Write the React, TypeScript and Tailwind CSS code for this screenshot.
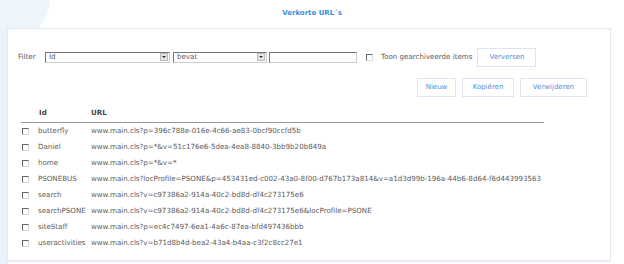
import React from "react";

interface Row {
  id: string;
  url: string;
}

const rows: Row[] = [
  { id: "butterfly", url: "www.main.cls?p=396c788e-016e-4c66-ae83-0bcf90ccfd5b" },
  { id: "Daniel", url: "www.main.cls?p=*&v=51c176e6-5dea-4ea8-8840-3bb9b20b849a" },
  { id: "home", url: "www.main.cls?p=*&v=*" },
  {
    id: "PSONEBUS",
    url: "www.main.cls?locProfile=PSONE&p=453431ed-c002-43a0-8f00-d767b173a814&v=a1d3d99b-196a-44b6-8d64-f6d443993563",
  },
  { id: "search", url: "www.main.cls?v=c97386a2-914a-40c2-bd8d-df4c273175e6" },
  { id: "searchPSONE", url: "www.main.cls?v=c97386a2-914a-40c2-bd8d-df4c273175e6&locProfile=PSONE" },
  { id: "siteStaff", url: "www.main.cls?p=ec4c7497-6ea1-4a6c-87ea-bfd497436bbb" },
  { id: "useractivities", url: "www.main.cls?v=b71d8b4d-bea2-43a4-b4aa-c3f2c8cc27e1" },
];

const Checkbox = () => (
  <span className="block w-[7px] h-[7px] border-t border-l border-t-[#666] border-l-[#666] border-r border-b border-r-[#ddd] border-b-[#ddd] bg-white" />
);

const Select = ({ value, width }: { value: string; width: string }) => (
  <div className={`flex items-center h-[11px] border border-[#777] border-r-[#ccc] border-b-[#ccc] bg-white ${width}`}>
    <span className="flex-1 pl-[3px] leading-none">{value}</span>
    <span className="w-[8px] h-[8px] mr-[1px] bg-[#e4e4e4] border border-[#bbb] flex items-center justify-center">
      <span className="block w-0 h-0 border-l-[2px] border-r-[2px] border-t-[2px] border-l-transparent border-r-transparent border-t-[#333]" />
    </span>
  </div>
);

const Button = ({ label, width }: { label: string; width: string }) => (
  <button className={`h-[19px] ${width} border border-[#dbe6f2] bg-white text-[#4a90d9] text-[7px] leading-none`}>
    {label}
  </button>
);

export default function App() {
  return (
    <div
      className="relative w-[624px] h-[264px] overflow-hidden bg-white text-[#5a5a5a] text-[7.1px]"
      style={{ fontFamily: "'DejaVu Sans', Verdana, sans-serif" }}
    >
      {/* decorative corner swirl */}
      <div className="absolute -left-[30px] -top-[40px] w-[80px] h-[80px] rounded-full bg-[#e8f2fa] opacity-70" />
      <div className="absolute left-0 top-[28px] w-[8px] h-[236px] bg-[#eaf3fb]" />

      <div className="relative flex flex-col h-full">
        <div className="h-[28px] flex items-center justify-center">
          <span className="text-[#3a8fdc] font-bold text-[7px] -mt-[1px]">Verkorte URL´s</span>
        </div>

        <div className="ml-[7px] w-[604px] h-[233px] border border-[#e4e8f2] bg-white shadow-[0_1px_1px_#eef]">
          {/* filter row */}
          <div className="flex items-center mt-[18px] h-[20px]">
            <span className="ml-[10px] w-[27px]">Filter</span>
            <Select value="Id" width="w-[125px]" />
            <span className="w-[3px]" />
            <Select value="bevat" width="w-[94px]" />
            <span className="w-[2px]" />
            <div className="w-[88px] h-[11px] border border-[#777] border-r-[#ccc] border-b-[#ccc] bg-white" />
            <span className="w-[9px]" />
            <Checkbox />
            <span className="ml-[8px]">Toon gearchiveerde items</span>
            <span className="w-[5px]" />
            <Button label="Verversen" width="w-[59px]" />
          </div>

          {/* action buttons */}
          <div className="flex justify-end gap-[6px] mt-[11px] pr-[23px]">
            <Button label="Nieuw" width="w-[39px]" />
            <Button label="Kopiëren" width="w-[52px]" />
            <Button label="Verwijderen" width="w-[67px]" />
          </div>

          {/* table */}
          <div className="ml-[13px] w-[523px] mt-[15px]">
            <div className="flex items-end h-[11px] border-b border-[#999] pb-[3px] font-bold text-[#444]">
              <span className="ml-[18px] w-[52px]">Id</span>
              <span>URL</span>
            </div>
            <div className="flex flex-col">
              {rows.map((row) => (
                <div key={row.id} className="flex items-center h-[16px] whitespace-nowrap">
                  <span className="ml-[1px] w-[16px]">
                    <Checkbox />
                  </span>
                  <span className="w-[53px]">{row.id}</span>
                  <span>{row.url}</span>
                </div>
              ))}
            </div>
          </div>
        </div>
      </div>
    </div>
  );
}
